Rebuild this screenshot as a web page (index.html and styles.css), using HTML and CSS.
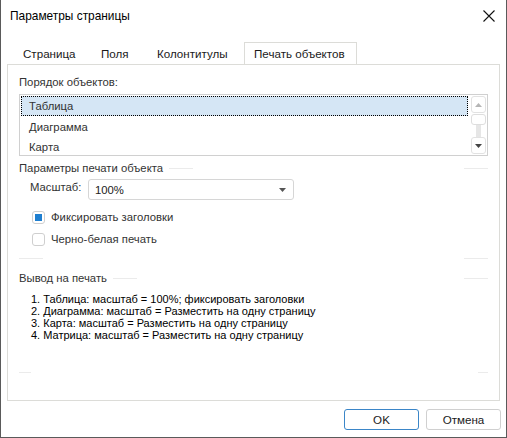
FILE: index.html
```html
<!DOCTYPE html>
<html>
<head>
  <meta charset="utf-8">
  <title>Параметры страницы</title>
  <link rel="stylesheet" href="styles.css">
</head>
<body>
  <div class="dialog">

    <div class="titlebar">
      <span class="title">Параметры страницы</span>
      <svg class="close" width="12" height="12" viewBox="0 0 12 12">
        <path d="M0.5 0.5 L11.5 11.5 M11.5 0.5 L0.5 11.5" stroke="#111" stroke-width="1.1" fill="none"/>
      </svg>
    </div>

    <div class="tabs">
      <div class="tab tab-page">Страница</div>
      <div class="tab tab-margins">Поля</div>
      <div class="tab tab-headers">Колонтитулы</div>
      <div class="tab tab-print active">Печать объектов</div>
    </div>

    <div class="panel">
      <div class="label">Порядок объектов:</div>

      <div class="listbox">
        <div class="items">
          <div class="item selected">Таблица</div>
          <div class="item">Диаграмма</div>
          <div class="item">Карта</div>
        </div>
        <div class="scrollbar">
          <div class="sb-btn">
            <svg width="7" height="4" viewBox="0 0 7 4"><path d="M3.5 0 L7 4 L0 4 Z" fill="#b5b5b5"/></svg>
          </div>
          <div class="sb-thumb"></div>
          <div class="sb-track"></div>
          <div class="sb-btn">
            <svg width="7" height="4" viewBox="0 0 7 4"><path d="M0 0 L7 0 L3.5 4 Z" fill="#444"/></svg>
          </div>
        </div>
      </div>

      <div class="group-head first">
        <span class="group-title">Параметры печати объекта</span>
        <span class="rule"></span>
        <span class="spacer"></span>
        <span class="rule"></span>
      </div>

      <div class="scale-row">
        <span class="scale-label">Масштаб:</span>
        <div class="combo">
          <span>100%</span>
          <svg width="7" height="4" viewBox="0 0 7 4"><path d="M0 0 L7 0 L3.5 4 Z" fill="#555"/></svg>
        </div>
      </div>

      <div class="check-row">
        <span class="check checked"><span class="mark"></span></span>
        <span>Фиксировать заголовки</span>
      </div>
      <div class="check-row">
        <span class="check"></span>
        <span>Черно-белая печать</span>
      </div>

      <div class="group-head sep">
        <span class="rule"></span>
        <span class="spacer"></span>
        <span class="rule"></span>
      </div>

      <div class="group-head second">
        <span class="group-title">Вывод на печать</span>
        <span class="rule"></span>
        <span class="spacer"></span>
        <span class="rule"></span>
      </div>

      <div class="summary">
        <div>1. Таблица: масштаб = 100%; фиксировать заголовки</div>
        <div>2. Диаграмма: масштаб = Разместить на одну страницу</div>
        <div>3. Карта: масштаб = Разместить на одну страницу</div>
        <div>4. Матрица: масштаб = Разместить на одну страницу</div>
      </div>

      <div class="group-head sep last">
        <span class="rule short"></span>
        <span class="spacer"></span>
        <span class="rule shorter"></span>
      </div>
    </div>

    <div class="footer">
      <button class="btn default">OK</button>
      <button class="btn">Отмена</button>
    </div>

  </div>
</body>
</html>
```

FILE: styles.css
```css
body {
  margin: 0;
  background: #fff;
  font-family: "Liberation Sans", Arial, sans-serif;
  font-size: 11.3px;
  color: #1a1a1a;
}
.dialog {
  width: 507px;
  height: 438px;
  box-sizing: border-box;
  border: 1px solid #5a5a5a;
  border-top: none;
  background: #fff;
}
.titlebar {
  height: 31px;
  display: flex;
  align-items: center;
  justify-content: space-between;
  padding: 0 11px 0 9px;
}
.title {
  font-size: 11.9px;
  color: #000;
}
.close {
  display: block;
}
.tabs {
  display: flex;
  margin-top: 11px;
  padding-left: 12px;
  height: 22px;
}
.tab {
  padding-left: 10px;
  line-height: 23px;
  font-size: 11.6px;
  color: #1a1a1a;
  box-sizing: border-box;
}
.tab-page { width: 78px; }
.tab-margins { width: 56px; }
.tab-headers { width: 97px; }
.tab-print { width: 113px; }
.tab.active {
  border: 1px solid #dcdcd8;
  border-bottom: none;
  background: #fff;
  line-height: 21px;
  padding-left: 9px;
  height: 22px;
}
.panel {
  margin: 0 6px 0 6px;
  height: 337px;
  box-sizing: border-box;
  border: 1px solid #dcdcd8;
  padding: 0 11px;
}
.label {
  margin-top: 8px;
  line-height: 18px;
  color: #333;
}
.listbox {
  margin-top: 3px;
  height: 62px;
  box-sizing: border-box;
  border: 1px solid #d0d0d0;
  display: flex;
}
.items {
  flex: 1;
  padding-top: 1px;
}
.item {
  height: 20px;
  line-height: 20px;
  padding-left: 8px;
  margin-left: 1px;
  color: #333;
}
.item.selected {
  background: #d5e6f5;
  outline: 1px dotted #000;
  outline-offset: -1px;
  margin-bottom: 1px;
}
.scrollbar {
  width: 17px;
  display: flex;
  flex-direction: column;
  align-items: center;
  padding: 1px 0 1px 2px;
}
.sb-btn {
  width: 15px;
  height: 17px;
  box-sizing: border-box;
  border: 1px solid #e2e2e2;
  border-radius: 3px;
  display: flex;
  align-items: center;
  justify-content: center;
}
.sb-thumb {
  width: 15px;
  height: 11px;
  margin-top: 1px;
  box-sizing: border-box;
  border: 1px solid #dedede;
  border-radius: 3px;
}
.sb-track {
  width: 5px;
  flex: 1;
  background: #e6e6e6;
}
.group-head {
  display: flex;
  align-items: center;
  line-height: 16px;
  color: #333;
}
.group-head.first {
  margin-top: 4px;
}
.group-head.second {
  margin-top: 11px;
}
.group-head.sep {
  margin-top: 8px;
  height: 1px;
}
.group-head.last {
  margin-top: 31px;
}
.rule {
  width: 24px;
  height: 1px;
  background: #ebebeb;
}
.group-title + .rule {
  margin-left: 6px;
}
.rule.short {
  width: 12px;
}
.rule.shorter {
  width: 10px;
}
.spacer {
  flex: 1;
}
.scale-row {
  display: flex;
  align-items: flex-start;
  margin-top: 3px;
  padding-left: 11px;
}
.scale-label {
  width: 58px;
  line-height: 17px;
  color: #333;
}
.combo {
  width: 206px;
  height: 21px;
  box-sizing: border-box;
  border: 1px solid #d6d6d6;
  border-radius: 3px;
  display: flex;
  align-items: center;
  justify-content: space-between;
  padding: 0 7px 0 6px;
  color: #222;
}
.check-row {
  display: flex;
  align-items: center;
  height: 22px;
  padding-left: 13px;
  color: #333;
}
.scale-row + .check-row {
  margin-top: 6px;
}
.check {
  width: 13px;
  height: 13px;
  box-sizing: border-box;
  border: 1px solid #cfcfcf;
  border-radius: 3px;
  margin-right: 6px;
  display: flex;
  align-items: center;
  justify-content: center;
}
.mark {
  width: 7px;
  height: 7px;
  background: #1f7fd0;
}
.summary {
  margin-top: 7px;
  padding-left: 12px;
  font-size: 11px;
  line-height: 12px;
  color: #000;
}
.footer {
  display: flex;
  justify-content: flex-end;
  gap: 7px;
  padding: 8px 5px 0 0;
}
.btn {
  width: 75px;
  height: 21px;
  background: #fff;
  border: 1px solid #d0d0d0;
  border-radius: 3px;
  font-family: inherit;
  font-size: 11.6px;
  color: #1a1a1a;
  padding: 0;
}
.btn.default {
  border-color: #3b86c8;
}
```
